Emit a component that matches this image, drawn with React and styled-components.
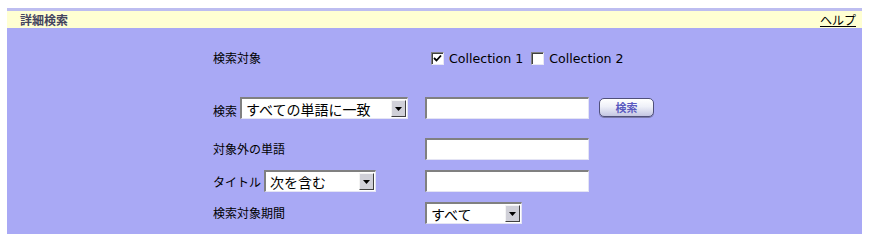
import React from "react";
import styled, { createGlobalStyle } from "styled-components";

const GlobalStyle = createGlobalStyle`
  body {
    margin: 8px 7px 0;
    font-family: "Noto Sans CJK JP", "DejaVu Sans", sans-serif;
    color: #000;
    background: #fff;
  }
`;

const Panel = styled.div`
  background: #a9a9f5;
  display: flex;
  flex-direction: column;
`;

const Header = styled.div`
  border-top: 3px solid #bdbdf0;
  background: #ffffd2;
  height: 17px;
  display: flex;
  align-items: center;
  justify-content: space-between;
  padding: 0 6px 0 13px;
`;

const Title = styled.span`
  font-size: 12px;
  font-weight: bold;
  color: #44445e;
  line-height: 14px;
`;

const HelpLink = styled.a`
  font-size: 12px;
  color: #000;
  text-decoration: underline;
  line-height: 14px;
  cursor: pointer;
`;

const Body = styled.div`
  display: flex;
  flex-direction: column;
  padding: 19px 0 10px 206px;
`;

const Row = styled.div`
  display: flex;
  align-items: center;
  height: 22px;
  margin-top: ${(p) => p.$gap || 0}px;
`;

const LabelCell = styled.div`
  width: 212px;
  display: flex;
  align-items: ${(p) => (p.$bottom ? "flex-end" : "center")};
  gap: 3px;
  height: 100%;
`;

const Label = styled.span`
  font-size: 12px;
  line-height: 14px;
  padding-bottom: ${(p) => p.$pb || 0}px;
  white-space: nowrap;
`;

const Controls = styled.div`
  display: flex;
  align-items: center;
  gap: 10px;
`;

const CheckGroup = styled.label`
  display: flex;
  align-items: center;
  gap: 5px;
  margin-left: ${(p) => p.$ml || 0}px;
  font-family: "DejaVu Sans", Verdana, sans-serif;
  font-size: 12.6px;
`;

const Box = styled.span`
  width: 13px;
  height: 13px;
  box-sizing: border-box;
  background: #fff;
  border-top: 1px solid #808080;
  border-left: 1px solid #808080;
  border-bottom: 1px solid #e8e8f4;
  border-right: 1px solid #e8e8f4;
  box-shadow: inset 1px 1px 0 #404040;
  display: flex;
  align-items: center;
  justify-content: center;
`;

const Checkbox = ({ checked }) => (
  <Box>
    {checked && (
      <svg width="9" height="9" viewBox="0 0 9 9">
        <path d="M1 4 L3.5 6.5 L8 1.5" stroke="#000" strokeWidth="1.8" fill="none" />
      </svg>
    )}
  </Box>
);

const TextInput = styled.input`
  width: ${(p) => p.$w}px;
  height: 22px;
  box-sizing: border-box;
  background: #fff;
  border-top: 2px solid #808080;
  border-left: 2px solid #808080;
  border-bottom: 1px solid #e4e4f4;
  border-right: 1px solid #e4e4f4;
  padding: 0 3px;
  margin: 0;
  outline: none;
  font-size: 13px;
`;

const SelectWrap = styled.div`
  width: ${(p) => p.$w}px;
  height: 22px;
  box-sizing: border-box;
  background: #fff;
  border-top: 2px solid #808080;
  border-left: 2px solid #808080;
  border-bottom: 1px solid #e4e4f4;
  border-right: 1px solid #e4e4f4;
  display: flex;
  align-items: stretch;
`;

const SelectBox = styled.select`
  flex: 1;
  min-width: 0;
  appearance: none;
  -webkit-appearance: none;
  border: none;
  background: transparent;
  outline: none;
  font-family: "Noto Sans CJK JP", sans-serif;
  font-size: 14px;
  color: #000;
  padding: 0 0 0 4px;
  margin: 0;
  line-height: 18px;
`;

const ArrowBtn = styled.span`
  width: 15px;
  margin: 1px 1px 1px 0;
  box-sizing: border-box;
  background: #d0d0d8;
  border-top: 1px solid #f4f4f4;
  border-left: 1px solid #f4f4f4;
  border-bottom: 1px solid #404040;
  border-right: 1px solid #404040;
  display: flex;
  align-items: center;
  justify-content: center;
`;

const Select = ({ w, options }) => (
  <SelectWrap $w={w}>
    <SelectBox defaultValue={options[0]}>
      {options.map((o) => (
        <option key={o}>{o}</option>
      ))}
    </SelectBox>
    <ArrowBtn>
      <svg width="7" height="4" viewBox="0 0 7 4">
        <path d="M0 0 H7 L3.5 4 Z" fill="#000" />
      </svg>
    </ArrowBtn>
  </SelectWrap>
);

const Button = styled.button`
  width: 55px;
  height: 19px;
  margin: 0 0 2px;
  padding: 0;
  border: 1px solid #50507a;
  border-radius: 5px;
  background: linear-gradient(#ffffff 0%, #eef0f8 45%, #c4c6e2 100%);
  box-shadow: 0 1px 0 #7a7aa8;
  font-family: "Noto Sans CJK JP", sans-serif;
  font-size: 11px;
  font-weight: bold;
  color: #5a5ac0;
  line-height: 15px;
`;

export default function App() {
  return (
    <>
      <GlobalStyle />
      <Panel>
        <Header>
          <Title>詳細検索</Title>
          <HelpLink>ヘルプ</HelpLink>
        </Header>
        <Body>
          <Row>
            <LabelCell>
              <Label>検索対象</Label>
            </LabelCell>
            <Controls>
              <CheckGroup $ml={6}>
                <Checkbox checked />
                Collection 1
              </CheckGroup>
              <CheckGroup $ml={-2}>
                <Checkbox />
                Collection 2
              </CheckGroup>
            </Controls>
          </Row>
          <Row $gap={28}>
            <LabelCell $bottom>
              <Label $pb={1}>検索</Label>
              <Select w={168} options={["すべての単語に一致"]} />
            </LabelCell>
            <Controls>
              <TextInput $w={164} />
              <Button>検索</Button>
            </Controls>
          </Row>
          <Row $gap={19}>
            <LabelCell>
              <Label>対象外の単語</Label>
            </LabelCell>
            <Controls>
              <TextInput $w={164} />
            </Controls>
          </Row>
          <Row $gap={10}>
            <LabelCell $bottom>
              <Label $pb={3}>タイトル</Label>
              <Select w={112} options={["次を含む"]} />
            </LabelCell>
            <Controls>
              <TextInput $w={164} />
            </Controls>
          </Row>
          <Row $gap={10}>
            <LabelCell>
              <Label>検索対象期間</Label>
            </LabelCell>
            <Controls>
              <Select w={97} options={["すべて"]} />
            </Controls>
          </Row>
        </Body>
      </Panel>
    </>
  );
}
